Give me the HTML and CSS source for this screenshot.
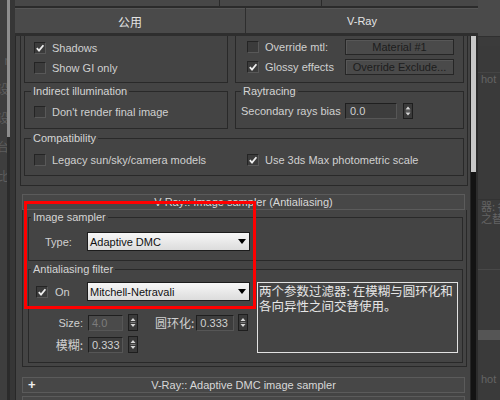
FILE: index.html
```html
<!DOCTYPE html>
<html>
<head>
<meta charset="utf-8">
<link rel="stylesheet" href="styles.css">
</head>
<body>
<div class="app">
  <div class="lstrip"><span>r</span><span>设</span><span>设</span><span>台</span><span>比</span></div>
  <div class="lbar"></div>
  <div class="lgap"></div>
  <div class="dialog">
    <div class="toprow"><span class="tr1"></span><span class="tr2"></span><span class="tr3"></span></div>
    <div class="tabs"><div class="tab tab1">公用</div><div class="tab tab2">V-Ray</div></div>
    <div class="body">
      <div class="content">
        <div class="roll1">
          <div class="row">
            <div class="grp cut gl">
              <div class="item"><span class="cb"><svg viewBox="0 0 10 10" width="10" height="10"><path d="M1.8 5.2 L4 7.6 L8.4 2.2" fill="none" stroke="#eeeeee" stroke-width="1.8"/></svg></span><span>Shadows</span></div>
              <div class="item"><span class="cb"></span><span>Show GI only</span></div>
            </div>
            <div class="grp cut gr">
              <div class="brow"><div class="item w98"><span class="cb"></span><span>Override mtl:</span></div><div class="btn">Material #1</div></div>
              <div class="brow"><div class="item w98"><span class="cb"><svg viewBox="0 0 10 10" width="10" height="10"><path d="M1.8 5.2 L4 7.6 L8.4 2.2" fill="none" stroke="#eeeeee" stroke-width="1.8"/></svg></span><span>Glossy effects</span></div><div class="btn">Override Exclude...</div></div>
            </div>
          </div>
          <div class="row r2">
            <fieldset class="fs fl"><legend class="lg6">Indirect illumination</legend>
              <div class="in"><div class="item"><span class="cb"></span><span>Don't render final image</span></div></div>
            </fieldset>
            <fieldset class="fs fr"><legend class="lg5">Raytracing</legend>
              <div class="in srow"><span class="slbl">Secondary rays bias</span><span class="num wide">0.0</span><svg class="spin" viewBox="0 0 10 16" width="10" height="16"><rect x="0.5" y="0.5" width="9" height="15" fill="#3a3a3a" stroke="#1e1e1e"/><path d="M2.5 6.5 L5 3.5 L7.5 6.5Z M2.5 9.5 L5 12.5 L7.5 9.5Z" fill="#d6d6d6"/><line x1="2.5" y1="8" x2="7.5" y2="8" stroke="#7a7a7a"/></svg></div>
            </fieldset>
          </div>
          <fieldset class="fs comp"><legend class="lg6">Compatibility</legend>
            <div class="in crow"><div class="item w213"><span class="cb"></span><span>Legacy sun/sky/camera models</span></div><div class="item"><span class="cb"><svg viewBox="0 0 10 10" width="10" height="10"><path d="M1.8 5.2 L4 7.6 L8.4 2.2" fill="none" stroke="#eeeeee" stroke-width="1.8"/></svg></span><span>Use 3ds Max photometric scale</span></div></div>
          </fieldset>
        </div>
        <div class="rhead r2h">V-Ray:: Image sampler (Antialiasing)</div>
        <div class="roll2">
          <fieldset class="fs is"><legend class="lg2">Image sampler</legend>
            <div class="in trow"><span class="tlbl">Type:</span><div class="dd"><span>Adaptive DMC</span><svg width="8" height="5" viewBox="0 0 8 5"><path d="M0 0H8L4 5Z" fill="#000"/></svg></div></div>
          </fieldset>
          <fieldset class="fs af"><legend class="lg2">Antialiasing filter</legend>
            <div class="in afwrap">
              <div class="afleft">
                <div class="onrow"><div class="item w51"><span class="cb"><svg viewBox="0 0 10 10" width="10" height="10"><path d="M1.8 5.2 L4 7.6 L8.4 2.2" fill="none" stroke="#eeeeee" stroke-width="1.8"/></svg></span><span>On</span></div><div class="dd"><span>Mitchell-Netravali</span><svg width="8" height="5" viewBox="0 0 8 5"><path d="M0 0H8L4 5Z" fill="#000"/></svg></div></div>
                <div class="prow p1"><span class="plbl">Size:</span><span class="num dis">4.0</span><svg class="spin2" viewBox="0 0 10 17" width="10" height="17"><rect x="0.5" y="0.5" width="9" height="16" fill="#3a3a3a" stroke="#1e1e1e"/><path d="M2.5 7 L5 4 L7.5 7Z M2.5 10 L5 13 L7.5 10Z" fill="#d6d6d6"/><line x1="2.5" y1="8.5" x2="7.5" y2="8.5" stroke="#7a7a7a"/></svg><span class="plbl2 cjk">圆环化:</span><span class="num n38">0.333</span><svg class="spin3" viewBox="0 0 10 17" width="10" height="17"><rect x="0.5" y="0.5" width="9" height="16" fill="#3a3a3a" stroke="#1e1e1e"/><path d="M2.5 7 L5 4 L7.5 7Z M2.5 10 L5 13 L7.5 10Z" fill="#d6d6d6"/><line x1="2.5" y1="8.5" x2="7.5" y2="8.5" stroke="#7a7a7a"/></svg></div>
                <div class="prow p2"><span class="plbl cjk">模糊:</span><span class="num">0.333</span><svg class="spin2" viewBox="0 0 10 17" width="10" height="17"><rect x="0.5" y="0.5" width="9" height="16" fill="#3a3a3a" stroke="#1e1e1e"/><path d="M2.5 7 L5 4 L7.5 7Z M2.5 10 L5 13 L7.5 10Z" fill="#d6d6d6"/><line x1="2.5" y1="8.5" x2="7.5" y2="8.5" stroke="#7a7a7a"/></svg></div>
              </div>
              <div class="desc">两个参数过滤器: 在模糊与圆环化和<br>各向异性之间交替使用。</div>
            </div>
          </fieldset>
        </div>
        <div class="rhead r3"><span class="plus">+</span><span>V-Ray:: Adaptive DMC image sampler</span><span></span></div>
        <div class="rhead r4"></div>
      </div>
      <div class="scroll"></div>
      <div class="rb"></div>
    </div>
  </div>
  <div class="rstrip">
    <div class="rs-top"></div>
    <div class="rs-a"></div>
    <div class="rs-txt t1">hot</div>
    <div class="rs-b"></div>
    <div class="rs-txt t2 cjk">器: 各</div>
    <div class="rs-txt cjk">之替</div>
    <div class="rs-c"></div>
    <div class="rs-d"></div>
    <div class="rs-band"></div>
    <div class="rs-e"></div>
    <div class="rs-txt">hot</div>
  </div>
</div>
<div class="redbox"></div>
</body>
</html>
```
FILE: styles.css
```css
* { box-sizing: border-box; }
html, body { margin: 0; }
body {
  width: 500px;
  height: 400px;
  overflow: hidden;
  background: #3c3c3c;
  font-family: "Liberation Sans", Arial, "Noto Sans CJK SC", sans-serif;
  font-size: 11px;
  color: #d0d0d0;
  position: relative;
}
.cjk { font-family: "Noto Sans CJK SC", sans-serif; }
.app { display: flex; height: 400px; }

.lstrip {
  width: 7px;
  background: #3e3e3e;
  overflow: hidden;
  display: flex;
  flex-direction: column;
  align-items: flex-end;
  padding-top: 54px;
  gap: 17px;
  color: #5d5d5d;
  font-family: "Noto Sans CJK SC", sans-serif;
  font-size: 12px;
  line-height: 12px;
}
.lstrip span { flex: none; width: 12px; text-align: right; margin-right: -2px; }
.lbar { width: 3px; background: linear-gradient(#8d8d8d 0 137px, #2b2b2b 137px); }
.lgap { width: 5px; background: #363636; }

.dialog { width: 463px; display: flex; flex-direction: column; }
.toprow { height: 8px; flex: none; display: flex; background: #474747; border-bottom: 2px solid #2b2b2b; }
.tr1 { width: 205px; border-right: 1px solid #2a2a2a; }
.tr2 { width: 102px; border-right: 1px solid #2a2a2a; }
.tabs { height: 28px; flex: none; display: flex; gap: 1px; background: #2e2e2e; border-bottom: 3px solid #2e2e2e; }
.tab {
  background: #4a4a4a;
  border-top: 1px solid #565656;
  color: #e4e4e4;
  display: flex;
  align-items: center;
  justify-content: center;
}
.tab1 { width: 230px; font-family: "Noto Sans CJK SC", sans-serif; font-size: 12px; }
.tab2 { flex: 1; }

.body { flex: 1; display: flex; min-height: 0; }
.content {
  width: 455px;
  background: #444444;
  border-left: 1px solid #282828;
  padding-left: 4px;
  overflow: hidden;
}
.scroll { width: 6px; border-left: 1px solid #262626; background: linear-gradient(#c8c8c8 0 136px, #131313 136px); }
.rb { width: 2px; background: #2c2c2c; }

.roll1 { width: 448px; height: 150px; border: 1px solid #292929; border-top: none; padding: 0 3px; }
.row { display: flex; gap: 7px; }
.grp { border: 1px solid #292929; }
.cut { border-top: none; height: 47px; }
.gl { width: 204px; padding: 6px 0 0 9px; display: flex; flex-direction: column; gap: 8px; }
.gr { flex: 1; padding: 3px 0 0 11px; display: flex; flex-direction: column; gap: 4px; }

.item { display: flex; align-items: center; gap: 6px; height: 12px; line-height: 12px; white-space: nowrap; }
.cb {
  width: 12px;
  height: 12px;
  flex: none;
  background: #3b3b3b;
  border: 1px solid #242424;
  border-right-color: #585858;
  border-bottom-color: #585858;
  display: flex;
  align-items: center;
  justify-content: center;
}
.brow { display: flex; align-items: center; height: 16px; }
.w98 { width: 98px; }
.btn {
  width: 109px;
  height: 16px;
  background: #4a4a4a;
  border: 1px solid #262626;
  box-shadow: inset 1px 1px 0 #575757;
  color: #1d1d1d;
  text-align: center;
  line-height: 14px;
  white-space: nowrap;
  overflow: hidden;
}

.fs { margin: 0; padding: 0; border: 1px solid #292929; min-width: 0; }
.fs legend { padding: 0 2px; line-height: 14px; height: 14px; color: #d4d4d4; font-size: 11px; }
.lg6 { margin-left: 6px; }
.lg5 { margin-left: 5px; }
.lg2 { margin-left: 2px; }
.r2 { margin-top: 1px; }
.r2 .fs { height: 45px; }
.fl { width: 204px; }
.fl .in { padding: 8px 0 0 9px; }
.fr { flex: 1; }
.fr .in { padding: 5px 0 0 5px; }
.srow { display: flex; align-items: center; height: 16px; box-sizing: content-box; }
.slbl { width: 104px; white-space: nowrap; }
.num {
  height: 16px;
  width: 35px;
  flex: none;
  background: #3d3d3d;
  border: 1px solid #1f1f1f;
  border-right-color: #565656;
  border-bottom-color: #565656;
  color: #d0d0d0;
  padding-left: 3px;
  line-height: 14px;
}
.wide { width: 52px; padding-left: 4px; }
.dis { background: #4a4a4a; color: #7c7c7c; }
.spin { margin-left: 6px; flex: none; display: block; }

.comp { margin-top: 2px; height: 45px; }
.comp .in { padding: 9px 0 0 9px; display: flex; }
.w213 { width: 213px; }

.rhead {
  margin: 8px 0 0 2px;
  width: 443px;
  height: 16px;
  background: #474747;
  border: 1px solid #5b5b5b;
  color: #d8d8d8;
  text-align: center;
  line-height: 14px;
  white-space: nowrap;
}
.roll2 { margin-left: 2px; width: 445px; height: 157px; border: 1px solid #292929; border-top: none; padding: 0 3px 0 5px; }
.is { height: 51px; }
.is .in { padding: 8px 0 0 16px; display: flex; align-items: center; }
.tlbl { width: 42px; }
.dd {
  width: 163px;
  height: 19px;
  flex: none;
  background: linear-gradient(#f7f7f7, #dcdcdc);
  border: 1px solid #1c1c1c;
  color: #111;
  display: flex;
  align-items: center;
  justify-content: space-between;
  padding: 0 3px 0 2px;
  white-space: nowrap;
}
.af { margin-top: 1px; height: 101px; }
.af .in { padding-top: 6px; display: flex; }
.afleft { width: 228px; }
.onrow { display: flex; align-items: center; height: 19px; padding-left: 7px; }
.w51 { width: 51px; gap: 7px; }
.prow { display: flex; align-items: center; height: 17px; }
.p1 { margin-top: 13px; }
.p2 { margin-top: 5px; }
.plbl { width: 54px; text-align: right; white-space: nowrap; }
.plbl.cjk { font-size: 12px; }
.prow .num { margin-left: 5px; }
.prow .n38 { width: 38px; margin-left: 2px; }
.spin2 { margin-left: 5px; flex: none; display: block; }
.spin3 { margin-left: 4px; flex: none; display: block; }
.plbl2 { margin-left: 17px; font-size: 12px; white-space: nowrap; }
.desc {
  width: 201px;
  height: 71px;
  border: 1px solid #e2e2e2;
  color: #e6e6e6;
  font-family: "Noto Sans CJK SC", sans-serif;
  font-size: 12.5px;
  line-height: 15px;
  padding-left: 1px;
  white-space: nowrap;
  overflow: hidden;
}
.r3 { margin-top: 10px; display: grid; grid-template-columns: 1fr auto 1fr; }
.plus { justify-self: start; padding-left: 5px; font-weight: bold; font-size: 13px; color: #f0f0f0; }
.r4 { margin-top: 3px; }

.rstrip {
  width: 22px;
  background: #3a3a3a;
  display: flex;
  flex-direction: column;
  color: #646464;
  font-size: 11px;
  line-height: 12px;
  overflow: hidden;
  white-space: nowrap;
}
.rstrip > div { flex: none; }
.rs-top { height: 37px; background: #4a4a4a; border-bottom: 1px solid #303030; }
.rs-a { height: 36px; border-top: 9px solid #3b3b3b; border-bottom: 1px solid #444; }
.rs-txt { height: 12px; padding-left: 3px; }
.rs-txt.cjk { font-size: 11px; }
.rs-b { height: 115px; border-top: 21px solid #3a3a3a; border-bottom: 1px solid #333; }
.rs-c { height: 46px; border-bottom: 1px solid #484848; }
.rs-d { height: 60px; }
.rs-band { height: 10px; background: #555; }
.rs-e { height: 33px; }

.redbox {
  position: absolute;
  left: 24px;
  top: 201px;
  width: 232px;
  height: 108px;
  border: 3px solid #ff0000;
}
```
